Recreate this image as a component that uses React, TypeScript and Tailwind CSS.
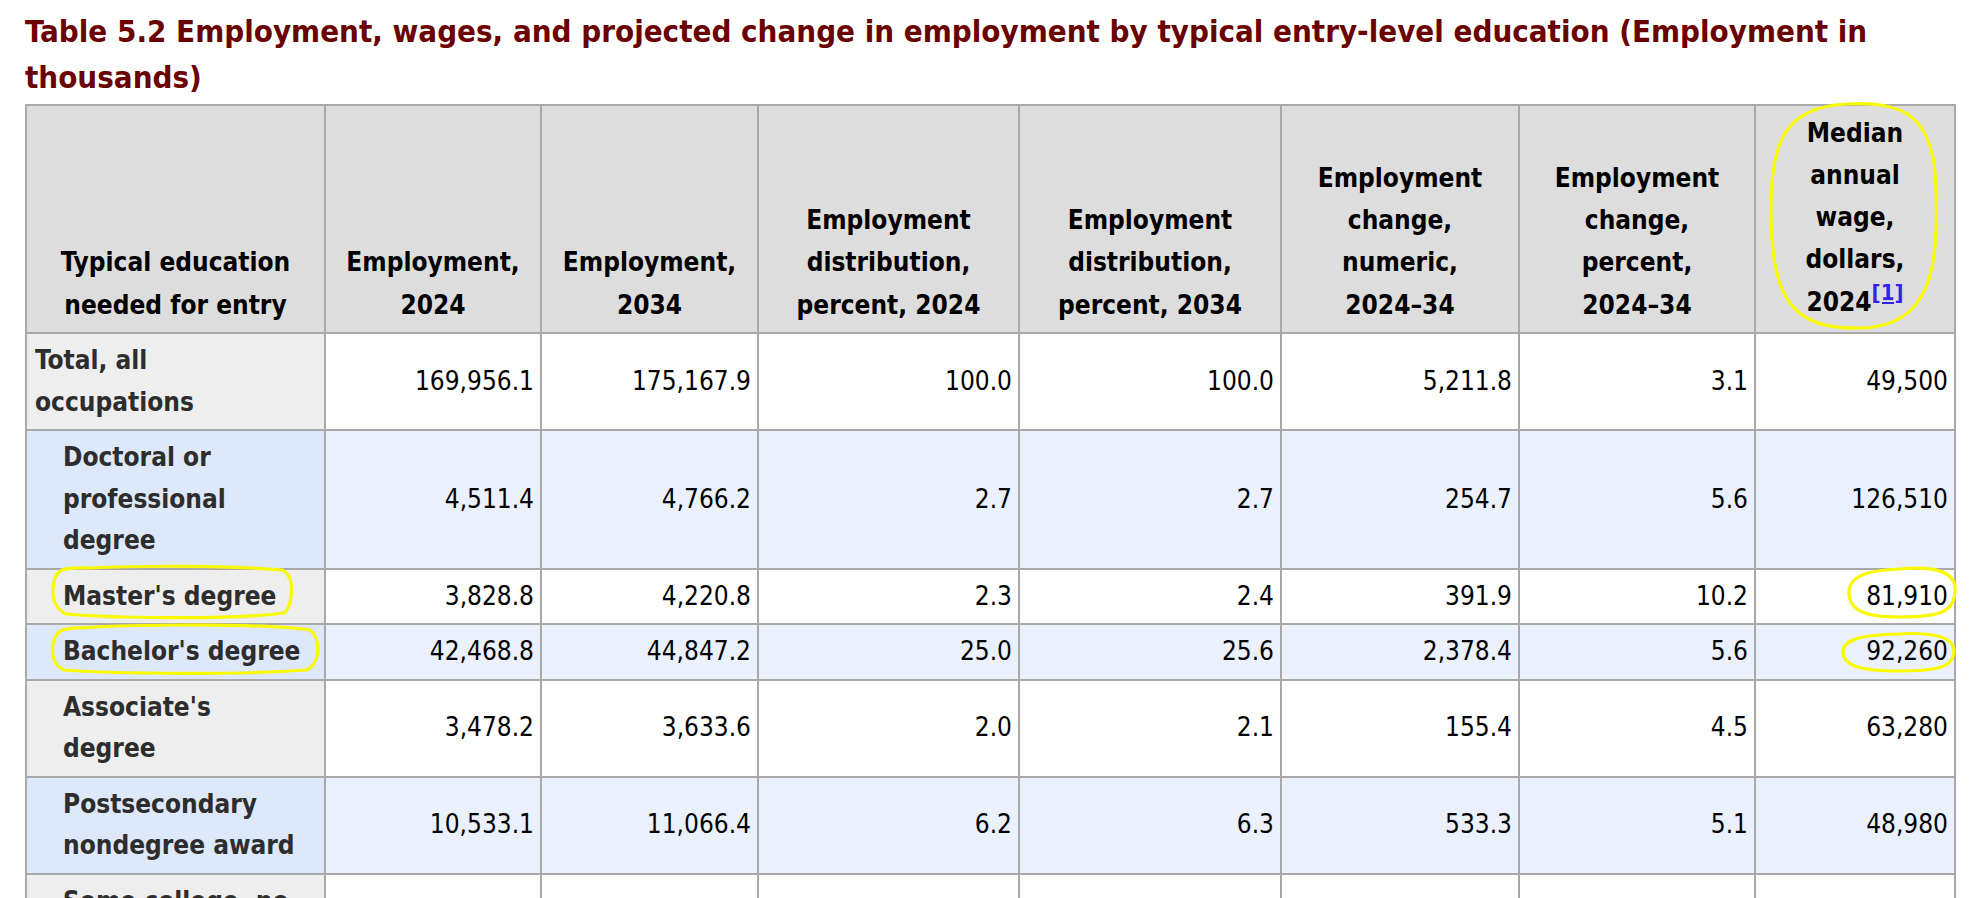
import React from "react";

type Row = {
  label: React.ReactNode;
  sub: boolean;
  tint: "gray" | "blue";
  values: string[];
};

const rows: Row[] = [
  {
    label: (<>Total, all<br />occupations</>),
    sub: false,
    tint: "gray",
    values: ["169,956.1", "175,167.9", "100.0", "100.0", "5,211.8", "3.1", "49,500"],
  },
  {
    label: (<>Doctoral or<br />professional<br />degree</>),
    sub: true,
    tint: "blue",
    values: ["4,511.4", "4,766.2", "2.7", "2.7", "254.7", "5.6", "126,510"],
  },
  {
    label: "Master's degree",
    sub: true,
    tint: "gray",
    values: ["3,828.8", "4,220.8", "2.3", "2.4", "391.9", "10.2", "81,910"],
  },
  {
    label: "Bachelor's degree",
    sub: true,
    tint: "blue",
    values: ["42,468.8", "44,847.2", "25.0", "25.6", "2,378.4", "5.6", "92,260"],
  },
  {
    label: (<>Associate's<br />degree</>),
    sub: true,
    tint: "gray",
    values: ["3,478.2", "3,633.6", "2.0", "2.1", "155.4", "4.5", "63,280"],
  },
  {
    label: (<>Postsecondary<br />nondegree award</>),
    sub: true,
    tint: "blue",
    values: ["10,533.1", "11,066.4", "6.2", "6.3", "533.3", "5.1", "48,980"],
  },
  {
    label: (<>Some college, no<br />degree</>),
    sub: true,
    tint: "gray",
    values: ["3,113.6", "3,160.2", "1.8", "1.8", "46.6", "1.5", "48,520"],
  },
];

const headers: React.ReactNode[] = [
  <>Typical education<br />needed for entry</>,
  <>Employment,<br />2024</>,
  <>Employment,<br />2034</>,
  <>Employment<br />distribution,<br />percent, 2024</>,
  <>Employment<br />distribution,<br />percent, 2034</>,
  <>Employment<br />change,<br />numeric,<br />2024–34</>,
  <>Employment<br />change,<br />percent,<br />2024–34</>,
  <>
    Median<br />annual<br />wage,<br />dollars,<br />2024
    <sup className="text-[22px] text-[#3322ee] underline">[1]</sup>
  </>,
];

const widths = ["w-[299px]", "w-[216px]", "w-[217px]", "w-[261px]", "w-[262px]", "w-[238px]", "w-[236px]", "w-[200px]"];

function Marks() {
  // hand-drawn yellow highlights over the table
  return (
    <svg
      className="pointer-events-none absolute left-0 top-0"
      width="1978"
      height="898"
      viewBox="0 0 1978 898"
      fill="none"
      stroke="#f9f900"
      strokeWidth="3.2"
      strokeLinecap="round"
      strokeLinejoin="round"
    >
      <path d="M1846 104 C1905 101 1935 116 1936 190 C1938 262 1934 326 1862 328 C1792 330 1772 300 1771 214 C1770 140 1786 107 1846 104 Z" />
      <path d="M90 568 C150 565 240 566 282 570 C296 576 293 606 284 613 C230 620 110 618 66 614 C48 606 50 576 62 570 C70 567 80 568 90 568 Z" />
      <path d="M95 627 C160 624 270 624 310 630 C322 640 320 665 306 670 C240 675 120 674 64 670 C48 664 50 636 62 630 C72 627 84 628 95 627 Z" />
      <path d="M1900 569 C1930 566 1956 570 1955 590 C1955 612 1940 617 1900 617 C1868 617 1850 612 1849 594 C1848 575 1870 570 1900 569 Z" />
      <path d="M1898 634 C1930 632 1955 636 1954 652 C1953 668 1935 671 1898 671 C1862 671 1843 666 1843 652 C1843 638 1866 635 1898 634 Z" />
    </svg>
  );
}

export default function App() {
  return (
    <div className="relative min-h-screen overflow-hidden bg-white px-[25px] pt-[8px] font-[family-name:'DejaVu_Sans_Condensed','DejaVu_Sans',sans-serif] font-stretch-condensed">
      <h2 className="whitespace-nowrap text-[31px] font-bold leading-[46px] text-[#6b0000]">
        Table 5.2 Employment, wages, and projected change in employment by typical entry-level education (Employment in
        <br />
        thousands)
      </h2>
      <table className="mt-[4px] w-[1929px] table-fixed border-collapse border-2 border-[#a9a9a9] text-[26px] leading-[41.5px]">
        <thead>
          <tr className="h-[228px] bg-[#dddddd] leading-[42.3px]">
            {headers.map((h, i) => (
              <th
                key={i}
                className={`${widths[i]} whitespace-nowrap border-2 border-[#a9a9a9] px-[6px] pt-[4px] text-center align-bottom font-bold text-black ${
                  i === 7 ? "pb-[9px]" : "pb-[6px]"
                }`}
              >
                {h}
              </th>
            ))}
          </tr>
        </thead>
        <tbody>
          {rows.map((r, i) => (
            <tr key={i}>
              <td
                className={`whitespace-nowrap border-2 border-[#a9a9a9] py-[6px] pr-[6px] text-left align-middle font-bold text-[#2d2d2d] ${
                  r.sub ? "pl-[36px]" : "pl-[8px]"
                } ${r.tint === "blue" ? "bg-[#dde8fb]" : "bg-[#eeeeee]"}`}
              >
                {r.label}
              </td>
              {r.values.map((v, j) => (
                <td
                  key={j}
                  className={`whitespace-nowrap border-2 border-[#a9a9a9] py-[6px] pl-[6px] pr-[6px] text-right align-middle text-black ${
                    r.tint === "blue" ? "bg-[#eaf1fd]" : "bg-white"
                  }`}
                >
                  {v}
                </td>
              ))}
            </tr>
          ))}
        </tbody>
      </table>
      <Marks />
    </div>
  );
}
